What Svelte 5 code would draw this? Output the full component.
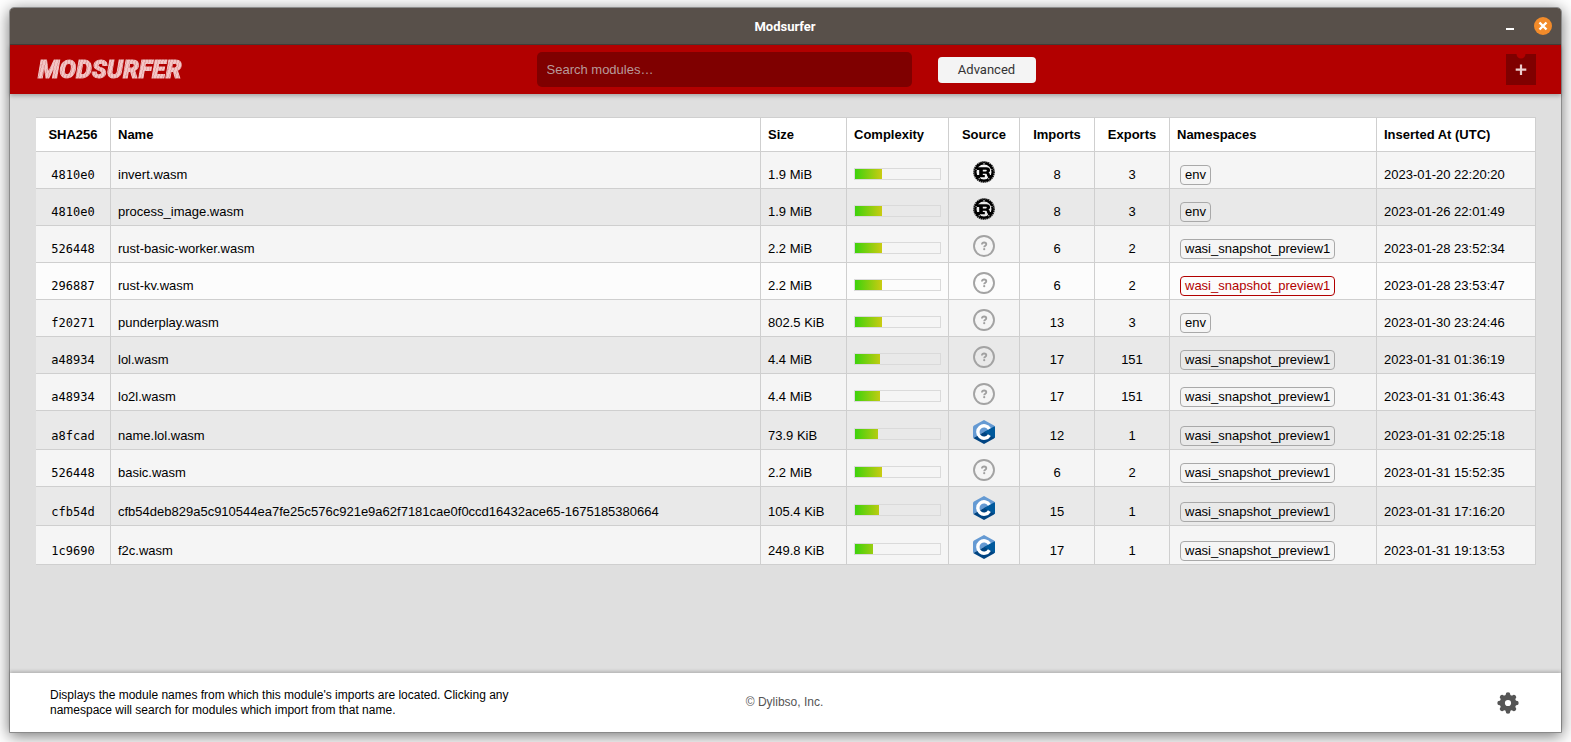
<script>
  const env = 'env';
  const wasi = 'wasi_snapshot_preview1';
  const modules = [
    { sha: '4810e0', name: 'invert.wasm', size: '1.9 MiB', level: 32, source: 'Rust', imports: 8, exports: 3, ns: env, at: '2023-01-20 22:20:20' },
    { sha: '4810e0', name: 'process_image.wasm', size: '1.9 MiB', level: 32, source: 'Rust', imports: 8, exports: 3, ns: env, at: '2023-01-26 22:01:49' },
    { sha: '526448', name: 'rust-basic-worker.wasm', size: '2.2 MiB', level: 32, source: 'Unknown', imports: 6, exports: 2, ns: wasi, at: '2023-01-28 23:52:34' },
    { sha: '296887', name: 'rust-kv.wasm', size: '2.2 MiB', level: 32, source: 'Unknown', imports: 6, exports: 2, ns: wasi, at: '2023-01-28 23:53:47', active: true },
    { sha: 'f20271', name: 'punderplay.wasm', size: '802.5 KiB', level: 32, source: 'Unknown', imports: 13, exports: 3, ns: env, at: '2023-01-30 23:24:46' },
    { sha: 'a48934', name: 'lol.wasm', size: '4.4 MiB', level: 29, source: 'Unknown', imports: 17, exports: 151, ns: wasi, at: '2023-01-31 01:36:19' },
    { sha: 'a48934', name: 'lo2l.wasm', size: '4.4 MiB', level: 29, source: 'Unknown', imports: 17, exports: 151, ns: wasi, at: '2023-01-31 01:36:43' },
    { sha: 'a8fcad', name: 'name.lol.wasm', size: '73.9 KiB', level: 27, source: 'C', imports: 12, exports: 1, ns: wasi, at: '2023-01-31 02:25:18' },
    { sha: '526448', name: 'basic.wasm', size: '2.2 MiB', level: 32, source: 'Unknown', imports: 6, exports: 2, ns: wasi, at: '2023-01-31 15:52:35' },
    { sha: 'cfb54d', name: 'cfb54deb829a5c910544ea7fe25c576c921e9a62f7181cae0f0ccd16432ace65-1675185380664', size: '105.4 KiB', level: 28, source: 'C', imports: 15, exports: 1, ns: wasi, at: '2023-01-31 17:16:20' },
    { sha: '1c9690', name: 'f2c.wasm', size: '249.8 KiB', level: 21, source: 'C', imports: 17, exports: 1, ns: wasi, at: '2023-01-31 19:13:53' }
  ];
  let query = $state('');
</script>

<div class="desktop">
  <div class="window">
    <div class="titlebar">
      <span class="title">Modsurfer</span>
      <div class="controls">
        <button class="minimize" aria-label="Minimize"></button>
        <button class="close" aria-label="Close">
          <svg viewBox="0 0 18 18" width="18" height="18"><path d="M5.5 5.5l7 7M12.5 5.5l-7 7" stroke="#fff" stroke-width="2.4" /></svg>
        </button>
      </div>
    </div>

    <header>
      <a class="logo" href="#home">MODSURFER</a>
      <div class="search">
        <input type="text" aria-label="Search modules" placeholder="Search modules…" bind:value={query} />
        <button class="advanced">Advanced</button>
      </div>
      <button class="add" aria-label="Add module">
        <svg viewBox="0 0 30 31" width="30" height="31">
          <path d="M0 0h10.500a4.500 4.500 0 0 0 9 0H30v31H0z" fill="#7f0000" />
          <path d="M15 10.500v10.500M9.700 15.700h10.600" stroke="#eccccc" stroke-width="2.200" />
        </svg>
      </button>
    </header>

    <main>
      <table>
        <colgroup>
          <col class="c-sha" /><col /><col class="c-size" /><col class="c-complexity" /><col class="c-source" />
          <col class="c-count" /><col class="c-count" /><col class="c-ns" /><col class="c-at" />
        </colgroup>
        <thead>
          <tr>
            <th class="mid">SHA256</th>
            <th>Name</th>
            <th>Size</th>
            <th>Complexity</th>
            <th class="mid">Source</th>
            <th class="mid">Imports</th>
            <th class="mid">Exports</th>
            <th>Namespaces</th>
            <th>Inserted At (UTC)</th>
          </tr>
        </thead>
        <tbody>
          {#each modules as m}
            <tr class:active={m.active} class:tall={m.source === 'C'}>
              <td class="mid mono">{m.sha}</td>
              <td>{m.name}</td>
              <td>{m.size}</td>
              <td class="level"><div class="meter"><div class="fill" style="width: {m.level}%"></div></div></td>
              <td class="mid icon">
                {#if m.source === 'Rust'}
                  <svg viewBox="0 0 22 22" width="22" height="22" role="img" aria-label="Rust">
                    <circle cx="11" cy="11" r="10.100" fill="none" stroke="#000" stroke-width="1.400" stroke-dasharray="1.400 0.580" />
                    <circle cx="11" cy="11" r="8.700" fill="none" stroke="#000" stroke-width="2.400" />
                    <path d="M2.500 6.300h10.900c2.300 0 3.700 1.200 3.700 2.900 0 1.200-.7 2-1.600 2.400.9.500 1.200 1.100 1.300 1.800.1.500.4.700.9.700h2v2.100h-3.500c-1.500 0-2.100-.9-2.200-2.200-.1-1-.6-1.300-1.500-1.300H9.800v1.400h2v2.100H3.500v-2.100h2.700V8.900H2.500zM9.800 8.700v1.700h2.900c.7 0 1.100-.3 1.100-.9s-.4-.8-1.100-.8z" fill="#000" fill-rule="evenodd" />
                    <path d="M5.800 16l1.200 3.200M16.200 16l-1.200 3.200" stroke="#000" stroke-width="2" />
                    <g fill="#ddd"><circle cx="11" cy="2.800" r=".7" /><circle cx="3.100" cy="8.500" r=".6" /><circle cx="18.900" cy="8.500" r=".6" /><circle cx="6.200" cy="17.700" r=".6" /><circle cx="15.800" cy="17.700" r=".6" /></g>
                  </svg>
                {:else if m.source === 'C'}
                  <svg viewBox="0 0 22 24" width="22" height="24" role="img" aria-label="C">
                    <path d="M11 0l10 5.600q1 .6 1 1.800L11 12 .4 18Q0 17.500 0 16.600V7.400Q0 6.200 1 5.600z" fill="#659ad3" />
                    <path d="M22 7.400v9.200q0 1.200-1 1.800L11 24 1 18.400.4 18 11 12z" fill="#004482" />
                    <path d="M21.600 6.200Q22 6.700 22 7.400v9.200q0 .9-.4 1.400L11 12z" fill="#00599c" />
                    <path d="M16.400 8.900a6.200 6.200 0 1 0 0 6.200" fill="none" stroke="#fff" stroke-width="3.400" />
                  </svg>
                {:else}
                  <svg viewBox="0 0 22 22" width="22" height="22" role="img" aria-label="Unknown">
                    <circle cx="11" cy="11" r="10" fill="none" stroke="#a3a3a3" stroke-width="1.900" />
                    <path d="M8.900 9.500c0-1.300.9-2 2.200-2s2.200.7 2.200 1.800c0 1.500-2.100 1.400-2.100 3" fill="none" stroke="#a0a0a0" stroke-width="1.800" />
                    <circle cx="11.200" cy="14.200" r="1.100" fill="#a0a0a0" />
                  </svg>
                {/if}
              </td>
              <td class="mid">{m.imports}</td>
              <td class="mid">{m.exports}</td>
              <td><button class="tag">{m.ns}</button></td>
              <td>{m.at}</td>
            </tr>
          {/each}
        </tbody>
      </table>
    </main>

    <footer>
      <p class="hint">Displays the module names from which this module's imports are located. Clicking any namespace will search for modules which import from that name.</p>
      <span class="copyright">© Dylibso, Inc.</span>
      <button class="settings" aria-label="Settings">
        <svg viewBox="0 0 22 22" width="22" height="22">
          <g stroke="#555" stroke-width="4.600" stroke-linecap="round"><path d="M11 2.600v16.800M2.600 11h16.800M5.100 5.100l11.800 11.800M16.900 5.100L5.100 16.900" /></g>
          <circle cx="11" cy="11" r="8.300" fill="#555" />
          <circle cx="11" cy="11" r="3.100" fill="#fff" />
        </svg>
      </button>
    </footer>
  </div>
</div>

<style>
  :global(body) {
    margin: 0;
    background: #fff;
    font-family: 'Liberation Sans', Arial, sans-serif;
    font-size: 13px;
    color: #000;
  }
  button {
    padding: 0;
    border: 0;
    background: none;
    font: inherit;
    color: inherit;
    cursor: pointer;
  }
  svg {
    display: block;
  }
  .desktop {
    box-sizing: border-box;
    min-height: 100vh;
    padding: 7px 9px 9px;
    display: flex;
    overflow: hidden;
  }
  .window {
    flex: 1;
    min-width: 0;
    display: flex;
    flex-direction: column;
    border: 1px solid #8c8c8c;
    border-radius: 5px 5px 0 0;
    background: #dfdfdf;
    box-shadow: 0 3px 16px rgba(0, 0, 0, 0.55);
  }
  .titlebar {
    display: grid;
    grid-template-columns: 1fr auto 1fr;
    align-items: center;
    height: 36px;
    padding: 0 9px 0 8px;
    border-bottom: 1px solid #443d38;
    border-radius: 4px 4px 0 0;
    background: #58504a;
    color: #fff;
  }
  .title {
    grid-column: 2;
    font: bold 13px Roboto, sans-serif;
  }
  .controls {
    display: flex;
    justify-content: flex-end;
    align-items: center;
    gap: 20px;
  }
  .minimize {
    width: 8px;
    height: 8px;
    border-bottom: 2px solid #fff;
  }
  .close {
    border-radius: 50%;
    background: #f28b2a;
  }
  header {
    position: relative;
    display: grid;
    grid-template-columns: 1fr auto 1fr;
    align-items: center;
    height: 49px;
    padding: 0 25px 0 26px;
    background: #b20000;
    box-shadow: 0 2px 4px rgba(0, 0, 0, 0.25);
  }
  .logo {
    justify-self: start;
    padding: 0 2px;
    font: italic 900 25px/32px Roboto, 'Liberation Sans', sans-serif;
    text-decoration: none;
    color: transparent;
    -webkit-text-stroke: 1px transparent;
    background: repeating-linear-gradient(105deg, #f3c6c6 0 2px, #e6a8a8 2px 3px);
    -webkit-background-clip: text;
    background-clip: text;
  }
  .search {
    display: flex;
    align-items: center;
    gap: 26px;
  }
  .search input {
    box-sizing: border-box;
    width: 375px;
    height: 35px;
    padding: 0 10px;
    border: 0;
    border-radius: 5px;
    background: #7f0000;
    color: #fff;
    font: inherit;
  }
  .search input::placeholder {
    color: #b89a9a;
    opacity: 1;
  }
  .advanced {
    width: 98px;
    height: 26px;
    border-radius: 4px;
    background: #f4f4f4;
    color: #333;
    font: 13px Roboto, sans-serif;
  }
  .add {
    justify-self: end;
  }
  main {
    flex: 1;
    padding: 23px 25px 24px 26px;
  }
  table {
    width: 100%;
    table-layout: fixed;
    border-collapse: separate;
    border-spacing: 0;
    border-top: 1px solid #cfcfcf;
  }
  .c-sha { width: 75px; }
  .c-size { width: 86px; }
  .c-complexity { width: 102px; }
  .c-source { width: 71px; }
  .c-count { width: 75px; }
  .c-ns { width: 207px; }
  .c-at { width: 159px; }
  th,
  td {
    box-sizing: border-box;
    padding: 0 7px;
    border-right: 1px solid #cfcfcf;
    border-bottom: 1px solid #cfcfcf;
    text-align: left;
    white-space: nowrap;
  }
  th {
    height: 34px;
    background: #fff;
    font-weight: bold;
  }
  td {
    height: 37px;
    padding-top: 9px;
  }
  .tall td {
    height: 39px;
    padding-top: 11px;
  }
  tbody tr {
    background: #f5f5f5;
  }
  tbody tr:nth-child(even) {
    background: #e9e9e9;
  }
  tbody tr.active {
    background: #fcfcfc;
  }
  .mid {
    text-align: center;
  }
  .mono {
    font: 12px 'DejaVu Sans Mono', monospace;
  }
  td.level {
    padding-top: 8px;
  }
  td.icon {
    padding-top: 3px;
  }
  .icon svg {
    margin: 0 auto;
  }
  .meter {
    height: 10px;
    border: 1px solid #dadada;
  }
  .fill {
    height: 10px;
    background: linear-gradient(90deg, #3dd20c, #cfcb12 28px);
  }
  .tag {
    display: block;
    height: 20px;
    margin-left: 3px;
    padding: 0 4px;
    border: 1px solid #a9a9a9;
    border-radius: 4px;
  }
  .active .tag {
    border-color: #b20000;
    color: #b20000;
  }
  footer {
    position: relative;
    display: grid;
    grid-template-columns: 1fr auto 1fr;
    align-items: center;
    height: 59px;
    padding: 0 42px 0 40px;
    background: #fff;
    box-shadow: 0 -2px 3px rgba(0, 0, 0, 0.18);
    font-size: 12px;
    line-height: 15px;
  }
  .hint {
    max-width: 500px;
    margin: 0;
  }
  .copyright {
    color: #555;
  }
  .settings {
    justify-self: end;
  }
</style>
